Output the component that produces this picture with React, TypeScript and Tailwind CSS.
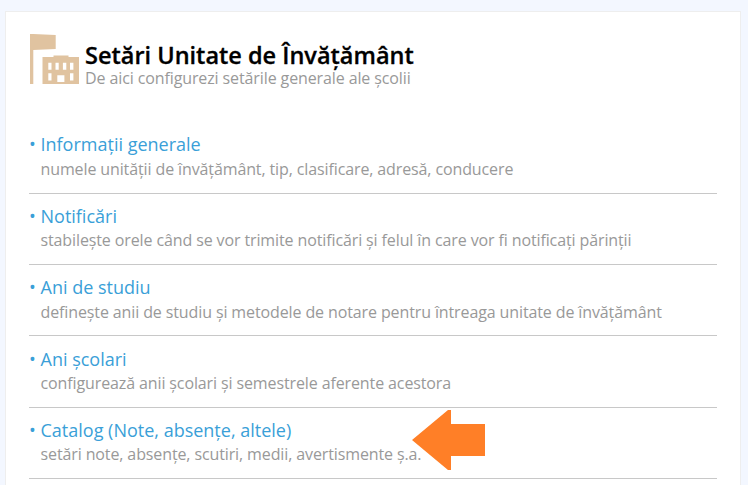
interface SettingItem {
  title: string
  description: string
}

const items: SettingItem[] = [
  {
    title: 'Informații generale',
    description: 'numele unității de învățământ, tip, clasificare, adresă, conducere',
  },
  {
    title: 'Notificări',
    description: 'stabilește orele când se vor trimite notificări și felul în care vor fi notificați părinții',
  },
  {
    title: 'Ani de studiu',
    description: 'definește anii de studiu și metodele de notare pentru întreaga unitate de învățământ',
  },
  {
    title: 'Ani școlari',
    description: 'configurează anii școlari și semestrele aferente acestora',
  },
  {
    title: 'Catalog (Note, absențe, altele)',
    description: 'setări note, absențe, scutiri, medii, avertismente ș.a.',
  },
]

export default function App() {
  return (
    <div className="h-[485px] w-[748px] overflow-hidden bg-[#f3f7ff] pt-[11px] pl-[5px] font-['Open_Sans','Noto_Sans',sans-serif]">
      <main className="relative h-[500px] w-[736px] border border-[#eeeeee] bg-white px-[23px] pt-[22px]">
        <header className="flex h-[88.2px] gap-[5px]">
          <SchoolIcon />
          <div className="pt-[7px]">
            <h1 className="text-[23.5px] leading-[28px] font-semibold whitespace-nowrap text-black [-webkit-text-stroke:0.3px_black]">
              Setări Unitate de Învățământ
            </h1>
            <p className="text-[16px] leading-[18px] tracking-[-0.11px] whitespace-nowrap text-[#999999]">
              De aici configurezi setările generale ale școlii
            </p>
          </div>
        </header>
        <ul>
          {items.map((item) => (
            <SettingRow key={item.title} item={item} />
          ))}
        </ul>
        <ArrowPointer />
      </main>
    </div>
  )
}

function SettingRow({ item }: { item: SettingItem }) {
  return (
    <li className="flex h-[71.4px] w-[688px] border-b border-[#c8c8c8] pt-[9.15px] whitespace-nowrap">
      <span className="w-[11.5px] text-[18px] leading-[26px] text-[#3a9fd8]">•</span>
      <div>
        <a className="block text-[18px] leading-[26px] text-[#3a9fd8]">{item.title}</a>
        <p className="mt-[-0.55px] text-[16px] leading-[24px] tracking-[-0.115px] text-[#999999]">
          {item.description}
        </p>
      </div>
    </li>
  )
}

function SchoolIcon() {
  return (
    <svg className="h-[51px] w-[51px] shrink-0" viewBox="0 0 51 51" fill="#e0c3a0">
      <path d="M1 0H4.3L26.7 1V15L4.3 16V50H1Z" />
      <path
        fillRule="evenodd"
        d="M13.500 23H24.500V21.400H39.500V23H50V50H13.500ZM19.300 28.800V35.700H22.500V28.800ZM26.500 28.800V35.700H29.700V28.800ZM33.900 28.800V35.700H37.300V28.800ZM41 28.800V35.700H44.400V28.800ZM19.300 39.300V46.400H22.500V39.300ZM28.300 41.300V48H35.400V41.300ZM41 39.300V46.400H44.400V39.300Z"
      />
    </svg>
  )
}

function ArrowPointer() {
  return (
    <svg className="absolute top-[397px] left-[406px] h-[62px] w-[74px]" viewBox="0 0 74 62" fill="#ff7f27">
      <path d="M0 31 36 1H39V15H73V47H39V61H36Z" />
    </svg>
  )
}
